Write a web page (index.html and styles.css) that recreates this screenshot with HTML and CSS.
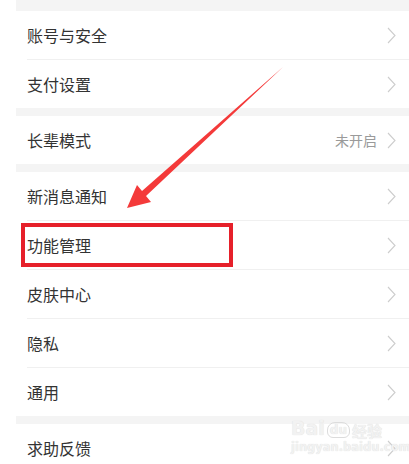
FILE: index.html
```html
<!DOCTYPE html>
<html lang="zh-CN">
<head>
<meta charset="utf-8">
<link rel="stylesheet" href="styles.css">
</head>
<body>
<div class="page">
  <div class="list">
    <div class="group">
      <div class="row"><span class="label">账号与安全</span><span class="right"><svg class="chev" viewBox="0 0 9 17"><polyline points="1,1 8,8.5 1,16"/></svg></span></div>
      <div class="row"><span class="label">支付设置</span><span class="right"><svg class="chev" viewBox="0 0 9 17"><polyline points="1,1 8,8.5 1,16"/></svg></span></div>
    </div>
    <div class="group">
      <div class="row"><span class="label">长辈模式</span><span class="right"><span class="value">未开启</span><svg class="chev" viewBox="0 0 9 17"><polyline points="1,1 8,8.5 1,16"/></svg></span></div>
    </div>
    <div class="group">
      <div class="row"><span class="label">新消息通知</span><span class="right"><svg class="chev" viewBox="0 0 9 17"><polyline points="1,1 8,8.5 1,16"/></svg></span></div>
      <div class="row"><span class="label">功能管理</span><span class="right"><svg class="chev" viewBox="0 0 9 17"><polyline points="1,1 8,8.5 1,16"/></svg></span><span class="highlight"></span></div>
      <div class="row"><span class="label">皮肤中心</span><span class="right"><svg class="chev" viewBox="0 0 9 17"><polyline points="1,1 8,8.5 1,16"/></svg></span></div>
      <div class="row"><span class="label">隐私</span><span class="right"><svg class="chev" viewBox="0 0 9 17"><polyline points="1,1 8,8.5 1,16"/></svg></span></div>
      <div class="row"><span class="label">通用</span><span class="right"><svg class="chev" viewBox="0 0 9 17"><polyline points="1,1 8,8.5 1,16"/></svg></span></div>
    </div>
    <div class="group">
      <div class="row"><span class="label">求助反馈</span><span class="right"><svg class="chev" viewBox="0 0 9 17"><polyline points="1,1 8,8.5 1,16"/></svg></span></div>
    </div>
  </div>
  <svg class="arrow" viewBox="0 0 409 464" width="409" height="464">
    <polygon points="127,208 137,185 142,191 283,67 146,196 151,202" fill="#f43a3a"/>
  </svg>
  <div class="watermark">
    <div class="wm-logo"><span class="wm-bai">Bai</span><span class="wm-paw">du</span><span class="wm-jy">经验</span></div>
    <div class="wm-url">jingyan.baidu.com</div>
  </div>
</div>
</body>
</html>
```
FILE: styles.css
```css
html, body {
  margin: 0;
  padding: 0;
  background: #ffffff;
}
body {
  font-family: "Noto Sans CJK SC", "Noto Sans", sans-serif;
  width: 409px;
  height: 464px;
  overflow: hidden;
}
.page {
  position: relative;
  width: 409px;
  height: 464px;
}
.list {
  margin-left: 16px;
  padding-top: 11px;
  background: #f4f4f4;
  display: flex;
  flex-direction: column;
  gap: 8px;
  height: 453px;
}
.group {
  background: #ffffff;
  display: flex;
  flex-direction: column;
}
.row {
  position: relative;
  height: 48px;
  display: flex;
  align-items: center;
  justify-content: space-between;
  padding: 0 13px 0 11px;
}
.row + .row {
  border-top: 1px solid #f0f0f0;
  margin-left: 11px;
  padding-left: 0;
}
.label {
  font-size: 16px;
  color: #333333;
  line-height: 1;
}
.right {
  display: flex;
  align-items: center;
  gap: 10px;
}
.value {
  font-size: 14px;
  color: #9a9a9a;
  line-height: 1;
}
.chev {
  width: 9px;
  height: 17px;
  fill: none;
  stroke: #cdcdcd;
  stroke-width: 1.1;
}
.highlight {
  position: absolute;
  left: -6px;
  top: 2px;
  width: 212px;
  height: 44px;
  border: 4px solid #e6202a;
  box-sizing: border-box;
}
.arrow {
  position: absolute;
  left: 0;
  top: 0;
  pointer-events: none;
}
.watermark {
  position: absolute;
  left: 291px;
  top: 412px;
  width: 100px;
  color: #f2f2f2;
  font-family: "DejaVu Sans", sans-serif;
  font-weight: bold;
  text-shadow: 0 0 1px #d6d6d6;
}
.wm-logo {
  display: flex;
  align-items: flex-end;
  height: 26px;
}
.wm-bai {
  font-size: 19px;
  line-height: 1;
}
.wm-paw {
  font-size: 12px;
  line-height: 1;
  border: 1.5px solid #dcdcdc;
  border-radius: 8px 8px 6px 6px;
  padding: 1px 2px;
  margin: 0 2px;
  color: #f2f2f2;
}
.wm-jy {
  font-family: "Noto Sans CJK SC", sans-serif;
  font-size: 15px;
  line-height: 1;
}
.wm-url {
  font-size: 11.5px;
  line-height: 1;
  margin-top: 4px;
}
```
